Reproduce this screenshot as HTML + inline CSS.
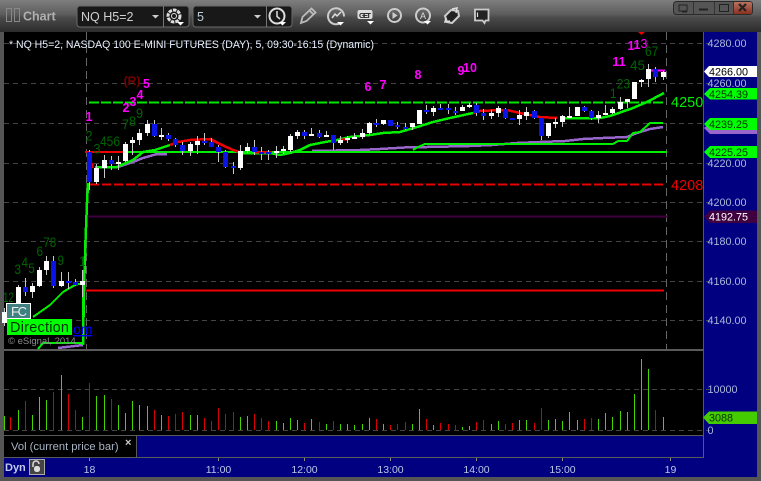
<!DOCTYPE html>
<html><head><meta charset="utf-8"><style>
html,body{margin:0;padding:0;background:#555;width:761px;height:481px;overflow:hidden}
svg{display:block;font-family:"Liberation Sans",sans-serif}
</style></head><body>
<svg width="761" height="481" viewBox="0 0 761 481" xmlns="http://www.w3.org/2000/svg">
<defs>
<linearGradient id="tb" x1="0" y1="0" x2="0" y2="1"><stop offset="0" stop-color="#7e7e7e"/><stop offset=".45" stop-color="#5c5c5c"/><stop offset=".55" stop-color="#4a4a4a"/><stop offset="1" stop-color="#2c2c2c"/></linearGradient>
<linearGradient id="cl" x1="0" y1="0" x2="0" y2="1"><stop offset="0" stop-color="#b8735f"/><stop offset="1" stop-color="#8c3020"/></linearGradient>
</defs>
<rect width="761" height="481" fill="#555"/>
<rect width="761" height="32" fill="url(#tb)"/>
<!-- chart area -->
<rect x="4" y="32" width="699" height="403" fill="#000"/>
<rect x="703" y="32" width="54" height="445" fill="#000080"/>
<rect x="4" y="435" width="133" height="22" fill="#000"/>
<rect x="137" y="435" width="566" height="22" fill="#000080"/>
<rect x="4" y="457" width="699" height="20" fill="#000080"/>
<g fill="#5a5a5a" shape-rendering="crispEdges">
<rect x="4" y="349" width="699" height="2"/>
<rect x="4" y="435" width="699" height="1"/>
<rect x="136" y="435" width="1" height="22"/>
<rect x="4" y="457" width="699" height="1"/>
<rect x="703" y="32" width="1" height="426"/>
</g>
<!-- grid -->
<g stroke="#444" stroke-width="1" stroke-dasharray="5 4" fill="none" shape-rendering="crispEdges">
<path d="M4 43.5H710M4 83.5H710M4 123.5H710M4 163.5H710M4 202.5H710M4 241.5H710M4 281.5H710M4 320.5H710M4 389.5H710M4 430.5H710"/>
</g>
<g stroke="#666" stroke-width="1" stroke-dasharray="8 5" fill="none" shape-rendering="crispEdges"><path d="M86.5 32V349M666.5 32V349"/></g>
<!-- levels -->
<g fill="none" shape-rendering="crispEdges">
<path d="M89 102.5H664" stroke="#00e800" stroke-width="2" stroke-dasharray="10 2"/>
<path d="M90 184.5H664" stroke="#e80000" stroke-width="2" stroke-dasharray="9 3"/>
<path d="M86 216.5H668" stroke="#400040" stroke-width="2"/>
<path d="M82 290.5H664" stroke="#f00000" stroke-width="2"/>
<!-- purple -->
<path d="M58 348L83 345M118 167L133 162L143 158L157 154L167 154M312 151L360 150L380 149L413 147L427 147L470 146L492 145L517 143L540 142L565 141L583 139L603 138L627 137L637 133L650 129L663 127" stroke="#9966cc" stroke-width="2.500"/>
<!-- band -->
<path d="M43 343H83V270M413 150L418 147L425 144H500L613 144L618 141L627 141L633 133L640 132L650 123L663 123" stroke="#00ee00" stroke-width="2"/>
<path d="M92 152H667" stroke="#00ee00" stroke-width="2"/>
<path d="M85 152H123" stroke="#f00000" stroke-width="2"/>
<!-- EMA -->
<path d="M33 317L50 305L63 292L75 285L83 283M38 349L43 343" stroke="#00f000" stroke-width="2"/>
<path d="M83 345L84 290L85.500 240L87 203L88 183M95 167L117 167L133 160L143 152L155 150L170 145M243 153L250 153L270 153L280 155L290 153L300 150L310 145L325 142L337 140L350 137L370 135L383 133L400 132L417 127L433 122L450 118L473 113M560 118L600 118L610 116L633 108L647 102L664 93" stroke="#00f000" stroke-width="2.500"/>
<path d="M92 168V163M170 145L178 142L190 140L210 139L222 145L233 150L243 153M255 152L272 152M340 140L347 139M473 113L480 111L500 110L507 110L520 113L540 117L557 118" stroke="#f00000" stroke-width="2.500"/>
<path d="M646 70.5H665" stroke="#ff00ff" stroke-width="2"/>
<!-- wicks -->
<path stroke="#c8c8c8" stroke-width="1" d="M4.5 308V326M18.5 285V317M32.5 283V298M39.5 267V287M46.5 256V275M61.5 272V287M82.5 270V297M96.5 164V184M104.5 155V178M118.5 156V170M125.5 142V162M132.5 137V155M139.5 129V145M147.5 120V136M161.5 128V140M190.5 142V156M197.5 136V154M240.5 145V170M247.5 143V153M276.5 146V158M283.5 146V154M290.5 134V152M297.5 130V139M311.5 128V136M326.5 131V137M340.5 136V145M347.5 136V143M354.5 133V139M362.5 129V139M369.5 122V135M383.5 120V125M412.5 123V130M433.5 106V116M462.5 105V111M469.5 103V108M491.5 110V119M498.5 106V117M519.5 110V125M526.5 107V120M548.5 123V138M555.5 118V128M562.5 115V127M569.5 107V118M598.5 111V123M605.5 105V115M612.5 107V114M620.5 97V110M627.5 99V108M641.5 79V87M648.5 64V87M663.5 71V80M10.5 308V322M25.5 278V296M53.5 256V288M68.5 272V289M75.5 279V286M89.5 150V190M111.5 156V170M154.5 120V137M168.5 133V141M175.5 138V147M182.5 142V155M204.5 133V145M211.5 138V147M218.5 145V162M225.5 150V168M233.5 162V174M254.5 140V155M261.5 147V160M268.5 150V160M304.5 130V139M319.5 130V138M333.5 135V150M376.5 119V127M397.5 122V129M405.5 123V130M426.5 105V114M440.5 104V110M448.5 104V114M455.5 107V115M476.5 103V116M483.5 109V120M505.5 108V119M534.5 110V119M541.5 118V140M584.5 106V112M591.5 110V120M655.5 67V82"/>
</g>
<!-- white bodies -->
<path shape-rendering="crispEdges" fill="#fff" d="M2 312h5v11h-5zM16 287h5v30h-5zM30 286h5v6h-5zM37 270h5v16h-5zM44 261h5v9h-5zM59 281h5v5h-5zM80 281h5v4h-5zM94 168h5v14h-5zM102 160h5v8h-5zM116 162h5v2h-5zM123 144h5v17h-5zM130 140h5v3h-5zM137 133h5v7h-5zM145 124h5v9h-5zM159 135h5v2h-5zM188 144h5v7h-5zM195 141h5v4h-5zM238 151h5v17h-5zM245 147h5v4h-5zM274 151h5v2h-5zM281 149h5v2h-5zM288 136h5v14h-5zM295 132h5v4h-5zM309 134h5v2h-5zM324 135h5v2h-5zM338 140h5v3h-5zM345 138h5v2h-5zM352 137h5v2h-5zM360 133h5v4h-5zM367 123h5v10h-5zM381 120h5v4h-5zM410 123h5v4h-5zM417 110h5v14h-5zM431 108h5v4h-5zM460 107h5v4h-5zM467 105h5v2h-5zM489 113h5v3h-5zM496 108h5v5h-5zM517 115h5v4h-5zM524 112h5v4h-5zM546 123h5v13h-5zM553 122h5v2h-5zM560 116h5v6h-5zM567 116h5v2h-5zM575 107h5v9h-5zM596 115h5v3h-5zM603 113h5v2h-5zM610 109h5v4h-5zM618 102h5v7h-5zM625 99h5v3h-5zM632 82h5v17h-5zM639 80h5v2h-5zM646 69h5v10h-5zM661 72h5v5h-5z"/>
<!-- blue bodies -->
<path shape-rendering="crispEdges" fill="#0a14e6" d="M8 313h5v4h-5zM23 287h5v5h-5zM51 261h5v25h-5zM66 281h5v2h-5zM73 282h5v3h-5zM87 152h5v30h-5zM109 160h5v4h-5zM152 124h5v12h-5zM166 135h5v4h-5zM173 139h5v6h-5zM180 145h5v6h-5zM202 141h5v2h-5zM209 142h5v5h-5zM216 147h5v5h-5zM223 152h5v15h-5zM231 166h5v2h-5zM252 147h5v5h-5zM259 152h5v2h-5zM266 152h5v2h-5zM302 132h5v4h-5zM317 133h5v4h-5zM331 135h5v8h-5zM374 123h5v2h-5zM388 120h5v6h-5zM395 125h5v2h-5zM403 127h5v2h-5zM424 110h5v2h-5zM438 108h5v2h-5zM446 108h5v2h-5zM453 111h5v2h-5zM474 105h5v8h-5zM481 113h5v3h-5zM503 109h5v9h-5zM510 118h5v2h-5zM532 111h5v7h-5zM539 118h5v18h-5zM582 107h5v4h-5zM589 111h5v7h-5zM653 69h5v8h-5z"/>
<!-- volume -->
<g fill="none" stroke-width="1" shape-rendering="crispEdges">
<path stroke="#44d400" d="M4.5 430V416M18.5 430V410M32.5 430V415M39.5 430V397M46.5 430V400M61.5 430V375M82.5 430V417M96.5 430V396M104.5 430V395M118.5 430V405M125.5 430V413M132.5 430V401M139.5 430V405M147.5 430V406M161.5 430V415M190.5 430V415M197.5 430V415M240.5 430V417M247.5 430V416M276.5 430V421M283.5 430V423M290.5 430V418M297.5 430V420M311.5 430V419M326.5 430V424M340.5 430V424M347.5 430V424M354.5 430V425M362.5 430V424M369.5 430V418M383.5 430V424M412.5 430V424M419.5 430V409M433.5 430V425M462.5 430V427M469.5 430V426M491.5 430V424M498.5 430V421M519.5 430V420M526.5 430V420M548.5 430V420M555.5 430V419M562.5 430V421M569.5 430V412M577.5 430V420M598.5 430V419M605.5 430V413M612.5 430V417M620.5 430V411M627.5 430V412M634.5 430V394M641.5 430V359M648.5 430V369M663.5 430V417"/>
<path stroke="#d80000" d="M10.5 430V417M25.5 430V401M53.5 430V392M68.5 430V394M75.5 430V410M89.5 430V383M111.5 430V399M154.5 430V410M168.5 430V416M175.5 430V414M182.5 430V412M204.5 430V418M211.5 430V421M218.5 430V408M225.5 430V414M233.5 430V412M254.5 430V414M261.5 430V418M268.5 430V421M304.5 430V423M319.5 430V422M333.5 430V421M376.5 430V419M390.5 430V425M397.5 430V424M405.5 430V422M426.5 430V419M440.5 430V423M448.5 430V424M455.5 430V425M476.5 430V422M483.5 430V420M505.5 430V424M512.5 430V423M534.5 430V423M541.5 430V408M584.5 430V419M591.5 430V418M655.5 430V410"/>
</g>
<!-- ticks -->
<path shape-rendering="crispEdges" stroke="#888" d="M89.5 458V461M218.5 458V461M304.5 458V461M390.5 458V461M476.5 458V461M562.5 458V461M670.5 458V461" fill="none"/>
<!-- title text -->
<text x="9" y="48" font-size="11" fill="#e8f0ff" textLength="365" lengthAdjust="spacingAndGlyphs">* NQ H5=2, NASDAQ 100 E-MINI FUTURES (DAY), 5, 09:30-16:15 (Dynamic)</text>
<!-- magenta labels -->
<g font-size="12.500" font-weight="bold" fill="#ff00ff" text-anchor="middle">
<text x="89" y="121">1</text><text x="126" y="112">2</text><text x="133" y="106">3</text><text x="140" y="99">4</text><text x="146.500" y="88">5</text><text x="368" y="91">6</text><text x="383" y="89">7</text><text x="418" y="79">8</text><text x="461" y="75">9</text><text x="470" y="72">10</text><text x="619" y="66">11</text><text x="631" y="50">1</text><text x="637" y="49">1</text><text x="644" y="48" font-weight="normal">3</text>
</g>
<text x="132" y="85" font-size="12" font-weight="bold" fill="#7a0000" text-anchor="middle">(R)</text>
<path d="M638 32h7l-3.500 3z" fill="#f00000"/>
<!-- green labels -->
<g font-size="14" fill="#006400" lengthAdjust="spacingAndGlyphs">
<text x="85.500" y="140.500" textLength="7" lengthAdjust="spacingAndGlyphs">2</text>
<text x="93.500" y="153.500" textLength="7" lengthAdjust="spacingAndGlyphs">3</text>
<text x="100" y="146" textLength="20" lengthAdjust="spacingAndGlyphs">456</text>
<text x="122" y="129" textLength="7" lengthAdjust="spacingAndGlyphs">7</text>
<text x="129" y="126" textLength="7" lengthAdjust="spacingAndGlyphs">8</text>
<text x="136" y="118" textLength="7" lengthAdjust="spacingAndGlyphs">9</text>
<text x="3" y="302" textLength="11" lengthAdjust="spacingAndGlyphs">12</text>
<text x="14.500" y="274" textLength="6.500" lengthAdjust="spacingAndGlyphs">3</text>
<text x="21.500" y="267" textLength="6.500" lengthAdjust="spacingAndGlyphs">4</text>
<text x="28.300" y="273" textLength="6.500" lengthAdjust="spacingAndGlyphs">5</text>
<text x="36.500" y="256" textLength="6.500" lengthAdjust="spacingAndGlyphs">6</text>
<text x="43.300" y="247" textLength="13" lengthAdjust="spacingAndGlyphs">78</text>
<text x="57.500" y="265" textLength="6.500" lengthAdjust="spacingAndGlyphs">9</text>
<text x="79" y="266" textLength="6.500" lengthAdjust="spacingAndGlyphs">1</text>
<text x="610" y="98" textLength="6.500" lengthAdjust="spacingAndGlyphs">1</text>
<text x="616.700" y="88.500" textLength="13.300" lengthAdjust="spacingAndGlyphs">23</text>
<text x="630" y="70" textLength="15" lengthAdjust="spacingAndGlyphs">45</text>
<text x="645" y="56" textLength="13.300" lengthAdjust="spacingAndGlyphs">67</text>
</g>
<text x="671" y="107" font-size="14.500" fill="#00ee00">4250</text>
<text x="671" y="190" font-size="14.500" fill="#f00000">4208</text>
<!-- overlays -->
<rect x="6.500" y="303.500" width="24" height="15" fill="#408080" stroke="#fff"/>
<text x="11" y="316" font-size="13" fill="#eee" textLength="16">FC</text>
<rect x="7" y="319" width="65" height="16" fill="#00ff00"/>
<text x="10" y="332" font-size="14.500" fill="#003000" textLength="59">Direction</text>
<text x="73" y="334" font-size="14" fill="#0000ff" text-decoration="underline">om</text>
<text x="8" y="344" font-size="9.500" fill="#8c8c8c">© eSignal, 2014</text>
<!-- axis labels -->
<g font-size="10.800" fill="#a9b8d8">
<text x="707.500" y="47">4280.00</text><text x="707.500" y="87">4260.00</text><text x="707.500" y="167">4220.00</text><text x="707.500" y="206">4200.00</text><text x="707.500" y="245">4180.00</text><text x="707.500" y="285">4160.00</text><text x="707.500" y="324">4140.00</text>
<text x="707.500" y="393">10000</text><text x="707.500" y="434">0</text>
</g>
<!-- tags -->
<path d="M704 71.500l5-5.500h48v11h-48z" fill="#fff"/>
<text x="709" y="75.500" font-size="10.800" fill="#000">4266.00</text>
<path d="M704 94l6-6h47v11.500h-47z" fill="#00ff00"/>
<text x="709" y="98" font-size="10.800" fill="#003000">4254.39</text>
<path d="M704 128l6 6h47v-11h-47z" fill="#9966cc"/>
<path d="M704 124l6-6h47v12h-47z" fill="#00ff00"/>
<text x="709" y="128" font-size="10.800" fill="#003000">4239.25</text>
<path d="M704 152l6-6h47v12h-47z" fill="#00ff00"/>
<text x="709" y="156" font-size="10.800" fill="#003000">4225.25</text>
<path d="M704 216.500l6-6h47v12.500h-47z" fill="#400040"/>
<text x="709" y="220.500" font-size="10.800" fill="#fff">4192.75</text>
<path d="M703 417.500l6-6h48v12.500h-48z" fill="#44cc00"/>
<text x="709" y="421.500" font-size="10.800" fill="#0a3000">3088</text>
<!-- tab -->
<text x="11" y="450" font-size="11.200" fill="#a8b4c4">Vol (current price bar)</text>
<text x="125" y="446" font-size="11" font-weight="bold" fill="#ccc">×</text>
<!-- bottom -->
<text x="5" y="471" font-size="11" font-weight="bold" fill="#c0cce8">Dyn</text>
<rect x="29.500" y="459.500" width="15" height="15" fill="#444" stroke="#aaa"/>
<path d="M33 467v-3a3 3 0 0 1 6 0" fill="none" stroke="#ddd" stroke-width="1.500"/><rect x="34" y="466" width="6" height="6" rx="2.500" fill="#ddd"/>
<g font-size="10.500" fill="#b8c8e4" text-anchor="middle">
<text x="89.500" y="473">18</text><text x="218.500" y="473">11:00</text><text x="304.500" y="473">12:00</text><text x="390.500" y="473">13:00</text><text x="476.500" y="473">14:00</text><text x="562.500" y="473">15:00</text><text x="670.500" y="473">19</text>
</g>
<!-- toolbar -->
<g fill="none" stroke="#888" stroke-width="1"><rect x="6.500" y="8.500" width="5" height="13"/><rect x="14.500" y="8.500" width="5" height="13"/></g>
<text x="23" y="20.500" font-size="12.500" font-weight="bold" fill="#b0b0b0">Chart</text>
<rect x="77" y="6" width="112" height="21" rx="3" fill="#181818" stroke="#6a6a6a"/>
<rect x="193" y="6" width="99" height="21" rx="3" fill="#181818" stroke="#6a6a6a"/>
<path d="M163.500 6V27M266.500 6V27" stroke="#777" shape-rendering="crispEdges"/>
<text x="81" y="21" font-size="12.500" fill="#d0d0d0">NQ H5=2</text>
<text x="197" y="21" font-size="12.500" fill="#c0d0d8">5</text>
<path d="M152 15h7l-3.500 3.500zM254 15h7l-3.500 3.500z" fill="#ccc"/>
<!-- gear -->
<circle cx="174" cy="16" r="6" fill="none" stroke="#ddd" stroke-width="3" stroke-dasharray="3.500 1"/><circle cx="174" cy="16" r="2.500" fill="none" stroke="#ddd"/>
<path d="M177 22h7l-3.500 3.500z" fill="#fff"/>
<!-- clock -->
<circle cx="277" cy="16" r="7.500" fill="none" stroke="#ddd" stroke-width="2"/><path d="M277 11v5.500l3 2.500" fill="none" stroke="#ddd" stroke-width="1.500"/>
<path d="M279 22h7l-3.500 3.500z" fill="#fff"/>
<!-- pencil -->
<path d="M301 23l1.500-6 9-8.500 4 4-9 8.500zM309.500 10.500l4 4" fill="none" stroke="#bbb" stroke-width="1.800"/>
<!-- chart circle -->
<path d="M341 22.500a8 8 0 1 1 3-6" fill="none" stroke="#ccc" stroke-width="2"/><path d="M332 18l3-4 2 2 4-4" fill="none" stroke="#ddd" stroke-width="1.500"/>
<path d="M337 22h7l-3.500 3.500z" fill="#fff"/>
<!-- GET -->
<rect x="357.500" y="10" width="15" height="9" rx="2" fill="#ddd"/>
<text x="359" y="18" font-size="7.500" font-weight="bold" fill="#222" textLength="12">GET</text>
<path d="M367 21h7l-3.500 3.500z" fill="#fff"/>
<!-- play -->
<circle cx="394.500" cy="15.500" r="6.500" fill="none" stroke="#ccc" stroke-width="2"/><path d="M392.500 12v7l5-3.500z" fill="#ccc"/>
<!-- A -->
<circle cx="423" cy="15.500" r="7" fill="none" stroke="#ccc" stroke-width="2"/>
<text x="423" y="19" font-size="9" fill="#ddd" text-anchor="middle">A</text>
<path d="M424 21h7l-3.500 3.500z" fill="#fff"/>
<!-- diamond arrows -->
<path d="M445 16l6-6 7 1 1 5-7 7-5-1z" fill="#222" stroke="#ccc" stroke-width="2"/>
<path d="M452 9l5-1-1 5M446 18l-1 4 5-1" stroke="#ddd" stroke-width="1.500" fill="none"/>
<!-- comment -->
<path d="M475 9.500h13.500v11h-3l-1 2.500-2-2.500h-7.500z" fill="#222" stroke="#ccc" stroke-width="1.800"/><path d="M477.500 12.500v4.500" stroke="#ddd" stroke-width="1.200"/>
<!-- window buttons -->
<rect x="673.500" y="1.500" width="79" height="13" rx="3" fill="#555" stroke="#2a2a2a"/>
<path d="M733 2h17a2 2 0 0 1 2 2v8a2 2 0 0 1-2 2h-17z" fill="url(#cl)"/>
<path d="M693.500 2V14M714.500 2V14M733.500 2V14" stroke="#333" shape-rendering="crispEdges"/>
<path d="M679 5h8v6h-8zM682 12h5" fill="none" stroke="#222"/>
<path d="M699 9.500h9" stroke="#222" stroke-width="2"/>
<rect x="719.500" y="4.500" width="9" height="7" fill="none" stroke="#222"/>
<path d="M739 4l7 7M746 4l-7 7" stroke="#222" stroke-width="2.200"/>
</svg>
</body></html>
